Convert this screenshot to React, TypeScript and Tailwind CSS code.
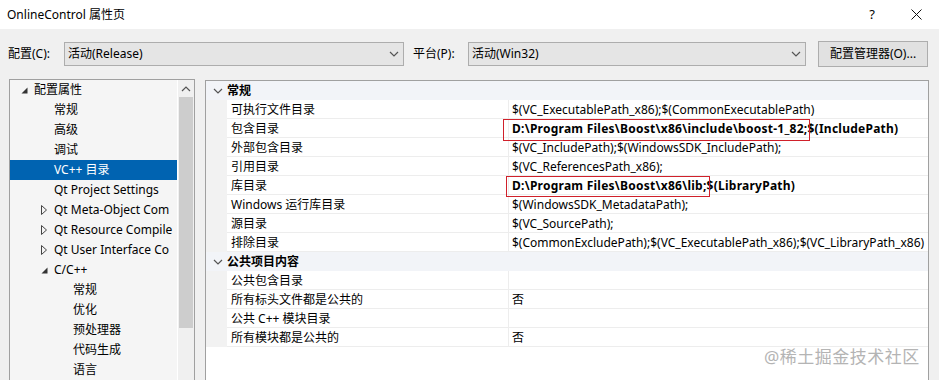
import React from 'react'

type TreeItem = { label: string; level: number; icon?: 'open' | 'closed'; selected?: boolean }

// labels are cut where the tree's scrollbar cuts them in the dialog
const treeItems: TreeItem[] = [
  { label: '配置属性', level: 0, icon: 'open' },
  { label: '常规', level: 1 },
  { label: '高级', level: 1 },
  { label: '调试', level: 1 },
  { label: 'VC++ 目录', level: 1, selected: true },
  { label: 'Qt Project Settings', level: 1 },
  { label: 'Qt Meta-Object Com', level: 1, icon: 'closed' },
  { label: 'Qt Resource Compile', level: 1, icon: 'closed' },
  { label: 'Qt User Interface Co', level: 1, icon: 'closed' },
  { label: 'C/C++', level: 1, icon: 'open' },
  { label: '常规', level: 2 },
  { label: '优化', level: 2 },
  { label: '预处理器', level: 2 },
  { label: '代码生成', level: 2 },
  { label: '语言', level: 2 },
]

const indent = ['pl-[10px]', 'pl-[30px]', 'pl-[49px]']

type Row =
  | { kind: 'header'; label: string }
  | { kind: 'item'; name: string; value: React.ReactNode }

function Boxed({ children, box }: { children: React.ReactNode; box: string }) {
  return (
    <span className="relative inline-block">
      {children}
      <span className={`absolute border-[1.5px] border-[#d0202a] pointer-events-none ${box}`} />
    </span>
  )
}

const rows: Row[] = [
  { kind: 'header', label: '常规' },
  { kind: 'item', name: '可执行文件目录', value: '$(VC_ExecutablePath_x86);$(CommonExecutablePath)' },
  {
    kind: 'item',
    name: '包含目录',
    value: (
      <span className="font-bold tracking-[0.25px]">
        <Boxed box="-left-[9px] -right-[3px] top-0 -bottom-[3px]">D:\Program Files\Boost\x86\include\boost-1_82;</Boxed>
        $(IncludePath)
      </span>
    ),
  },
  { kind: 'item', name: '外部包含目录', value: '$(VC_IncludePath);$(WindowsSDK_IncludePath);' },
  { kind: 'item', name: '引用目录', value: '$(VC_ReferencesPath_x86);' },
  {
    kind: 'item',
    name: '库目录',
    value: (
      <span className="font-bold tracking-[0.25px]">
        <Boxed box="-left-[6px] -right-[3px] top-0 -bottom-[2px]">D:\Program Files\Boost\x86\lib;</Boxed>
        $(LibraryPath)
      </span>
    ),
  },
  { kind: 'item', name: 'Windows 运行库目录', value: '$(WindowsSDK_MetadataPath);' },
  { kind: 'item', name: '源目录', value: '$(VC_SourcePath);' },
  { kind: 'item', name: '排除目录', value: '$(CommonExcludePath);$(VC_ExecutablePath_x86);$(VC_LibraryPath_x86)' },
  { kind: 'header', label: '公共项目内容' },
  { kind: 'item', name: '公共包含目录', value: '' },
  { kind: 'item', name: '所有标头文件都是公共的', value: '否' },
  { kind: 'item', name: '公共 C++ 模块目录', value: '' },
  { kind: 'item', name: '所有模块都是公共的', value: '否' },
]

function ChevronDown({ className = '' }: { className?: string }) {
  return (
    <svg width="10" height="6" viewBox="0 0 10 6" className={className}>
      <path d="M1 1 L5 5 L9 1" fill="none" stroke="#555" strokeWidth="1.2" />
    </svg>
  )
}

function Combo({ text, width }: { text: string; width: string }) {
  return (
    <div className={`${width} h-[24px] bg-[#e5e5e5] border border-[#adadad] flex items-center pl-[3px] pr-[4px]`}>
      <span className="flex-1">{text}</span>
      <ChevronDown />
    </div>
  )
}

function TreeIcon({ icon }: { icon?: 'open' | 'closed' }) {
  if (icon === 'open')
    return (
      <svg width="7" height="7" viewBox="0 0 7 7">
        <polygon points="6.5,0.5 6.5,6.5 0.5,6.5" fill="#333" />
      </svg>
    )
  if (icon === 'closed')
    return (
      <svg width="6" height="10" viewBox="0 0 6 10">
        <polygon points="0.5,0.5 5.5,5 0.5,9.5" fill="none" stroke="#444" strokeWidth="1" />
      </svg>
    )
  return null
}

export default function App() {
  return (
    <div className="relative w-[939px] h-[380px] overflow-hidden bg-[#f0f0f0] text-[12px] text-black font-['Noto_Sans','Noto_Sans_CJK_SC',sans-serif]">
      {/* Title bar */}
      <div className="h-[29px] bg-white flex items-center pl-[7px] pr-[17px]">
        <span className="flex-1">OnlineControl 属性页</span>
        <span className="text-[13px] mr-[36px]">?</span>
        <svg width="11" height="11" viewBox="0 0 11 11">
          <path d="M0.5 0.5 L10.5 10.5 M10.5 0.5 L0.5 10.5" stroke="#111" strokeWidth="1" />
        </svg>
      </div>

      {/* Configuration row */}
      <div className="h-[50px] flex items-center pl-[8px]">
        <span className="w-[56px]">配置(C):</span>
        <Combo text="活动(Release)" width="w-[340px]" />
        <span className="ml-[9px] w-[55px]">平台(P):</span>
        <Combo text="活动(Win32)" width="w-[338px]" />
        <button className="ml-[12px] w-[110px] h-[26px] bg-[#e1e1e1] border border-[#adadad]">配置管理器(O)...</button>
      </div>

      {/* Main area */}
      <div className="flex pl-[9px]">
        {/* Tree */}
        <div className="w-[186px] h-[320px] border border-[#a0a0a0] bg-[#f5f5f5] flex">
          <div className="w-[167px] overflow-hidden">
            {treeItems.map((t, i) => (
              <div
                key={i}
                className={`h-[20px] flex items-center whitespace-nowrap ${indent[t.level]} ${
                  t.selected ? 'bg-[#0063b1] text-white' : ''
                }`}
              >
                <span className="w-[14px] shrink-0 flex items-center pl-[1px]">
                  <TreeIcon icon={t.icon} />
                </span>
                <span>{t.label}</span>
              </div>
            ))}
          </div>
          <div className="w-[17px] bg-[#f0f0f0] border-l border-white flex flex-col">
            <div className="h-[17px] flex items-center justify-center">
              <ChevronDown className="rotate-180" />
            </div>
            <div className="h-[231px] mx-[1px] bg-[#cdcdcd]" />
          </div>
        </div>

        {/* Property grid */}
        <div className="ml-[10px] mt-[1px] w-[724px] h-[320px] border border-[#a0a0a0] bg-white">
          {rows.map((r, i) =>
            r.kind === 'header' ? (
              <div key={i} className="h-[19px] flex items-center bg-[#f2f4f8]">
                <span className="w-[21px] flex justify-center pl-[2px]">
                  <ChevronDown />
                </span>
                <span className="font-bold">{r.label}</span>
              </div>
            ) : (
              <div key={i} className="h-[19px] flex">
                <div className="w-[21px] bg-[#f2f2f2]" />
                <div className="w-[281px] pl-[4px] leading-[19px] border-b border-[#ededed] whitespace-nowrap">{r.name}</div>
                <div className="flex-1 pl-[3px] leading-[19px] border-b border-l border-[#ededed] whitespace-nowrap overflow-visible">
                  {r.value}
                </div>
              </div>
            )
          )}
        </div>
      </div>

      {/* Watermark */}
      <div className="absolute left-[764px] top-[344px] text-[17px] text-[#b4b4b4] tracking-[0.5px]">@稀土掘金技术社区</div>
    </div>
  )
}
